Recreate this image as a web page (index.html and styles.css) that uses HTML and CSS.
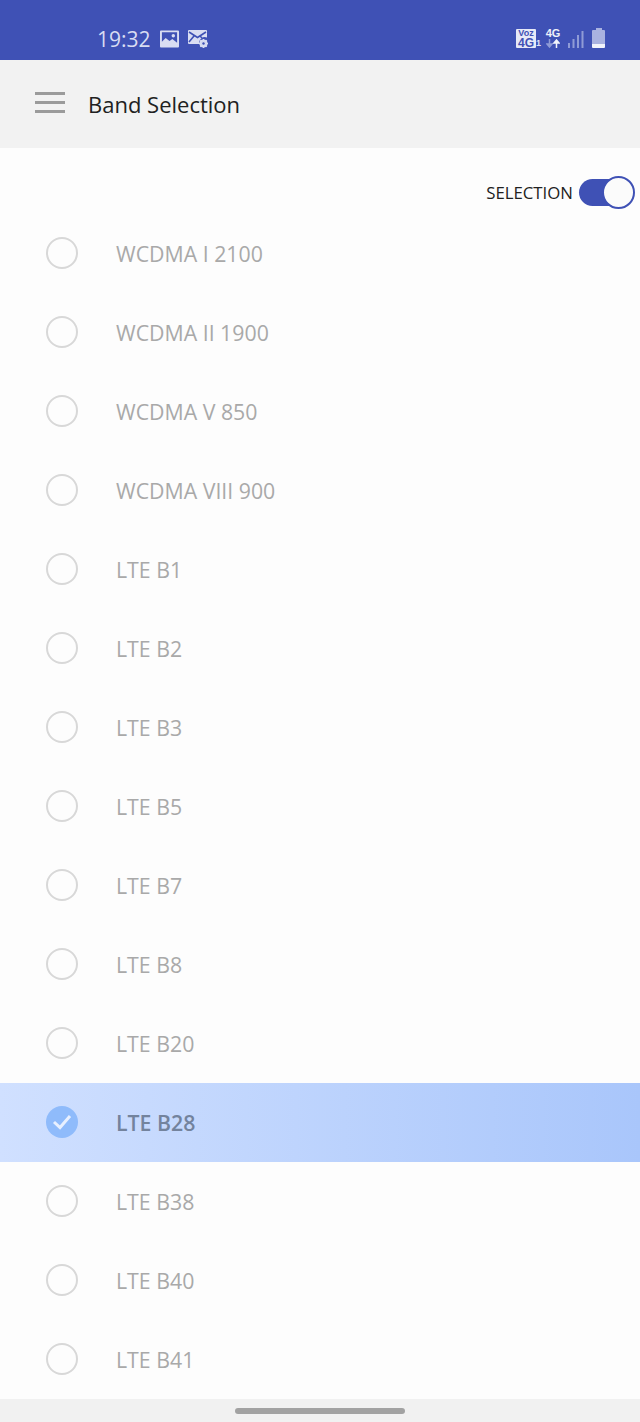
FILE: index.html
```html
<!DOCTYPE html>
<html lang="en">
<head>
  <meta charset="UTF-8" />
  <meta name="viewport" content="width=device-width, initial-scale=1.0"/>
  <title>Band Selection</title>
  <link rel="stylesheet" href="styles.css">
</head>
<body>

  <!-- Status Bar -->
  <div class="status-bar">
    <div class="status-left">
      <span class="clock">19:32</span>
      <svg class="status-icon" width="19" height="18" viewBox="0 0 20 18">
        <path fill="#d9ddf2" fill-rule="evenodd" d="M1 0h18a1 1 0 0 1 1 1v16a1 1 0 0 1-1 1H1a1 1 0 0 1-1-1V1a1 1 0 0 1 1-1zM2 2v10l4-4 4 3 3-2 5 4V2z"/>
        <circle cx="14" cy="5.500" r="1.800" fill="#d9ddf2"/>
      </svg>
      <svg class="status-icon" width="20" height="18" viewBox="0 0 20 18">
        <path fill="#d9ddf2" d="M1 0h17a1 1 0 0 1 1 1v6.500a5.500 5.500 0 0 0-7.500 6.500H1a1 1 0 0 1-1-1V1a1 1 0 0 1 1-1z"/>
        <path fill="none" stroke="#3f51b5" stroke-width="1.600" d="M1 2l8.500 5.500L18 2M1 12l5-6M12 6l2 2"/>
        <circle cx="15.500" cy="13.500" r="3" fill="none" stroke="#d9ddf2" stroke-width="2"/>
        <path stroke="#d9ddf2" stroke-width="1.400" d="M15.500 9v9M11 13.500h9M12.300 10.300l6.400 6.400M18.700 10.300l-6.400 6.400"/>
        <circle cx="15.500" cy="13.500" r="1.200" fill="#3f51b5"/>
      </svg>
    </div>
    <div class="status-right">
      <div class="sim-badge">
        <span class="sim-voz">Voz</span>
        <span class="sim-4g">4G</span>
      </div>
      <span class="sim-num">1</span>
      <div class="net-type">
        <span class="net-label">4G</span>
        <svg width="14" height="9" viewBox="0 0 14 9">
          <path stroke="#8f9bd6" stroke-width="1.500" fill="#8f9bd6" d="M3.500 0v6M1 5l2.500 3L6 5z"/>
          <path stroke="#f1f3fb" stroke-width="1.500" fill="#f1f3fb" d="M10.500 9V3M8 4l2.500-3L13 4z"/>
        </svg>
      </div>
      <svg class="signal" width="16" height="17" viewBox="0 0 16 17">
        <path fill="#8f9bd6" d="M0 12h2v5H0zM4.500 8h2v9h-2zM9 4h2v13H9zM13.500 0h2v17h-2z"/>
      </svg>
      <div class="battery">
        <div class="battery-cap"></div>
        <div class="battery-body"></div>
      </div>
    </div>
  </div>

  <!-- Toolbar -->
  <div class="toolbar">
    <div class="menu-icon">
      <span></span><span></span><span></span>
    </div>
    <div class="toolbar-title">Band Selection</div>
  </div>

  <!-- Selection Toggle -->
  <div class="selection-row">
    <span class="selection-label">SELECTION</span>
    <div class="toggle"><div class="toggle-knob"></div></div>
  </div>

  <!-- Band List -->
  <div class="band-list" id="bandList">
    <div class="band"><div class="radio"></div><div class="band-name">WCDMA I 2100</div></div>
    <div class="band"><div class="radio"></div><div class="band-name">WCDMA II 1900</div></div>
    <div class="band"><div class="radio"></div><div class="band-name">WCDMA V 850</div></div>
    <div class="band"><div class="radio"></div><div class="band-name">WCDMA VIII 900</div></div>
    <div class="band"><div class="radio"></div><div class="band-name">LTE B1</div></div>
    <div class="band"><div class="radio"></div><div class="band-name">LTE B2</div></div>
    <div class="band"><div class="radio"></div><div class="band-name">LTE B3</div></div>
    <div class="band"><div class="radio"></div><div class="band-name">LTE B5</div></div>
    <div class="band"><div class="radio"></div><div class="band-name">LTE B7</div></div>
    <div class="band"><div class="radio"></div><div class="band-name">LTE B8</div></div>
    <div class="band"><div class="radio"></div><div class="band-name">LTE B20</div></div>
    <div class="band selected">
      <div class="radio">
        <svg width="20" height="16" viewBox="0 0 20 16">
          <path fill="none" stroke="#e8f0ff" stroke-width="3" d="M2 8l6 5.500L18 2"/>
        </svg>
      </div>
      <div class="band-name">LTE B28</div>
    </div>
    <div class="band"><div class="radio"></div><div class="band-name">LTE B38</div></div>
    <div class="band"><div class="radio"></div><div class="band-name">LTE B40</div></div>
    <div class="band"><div class="radio"></div><div class="band-name">LTE B41</div></div>
  </div>

  <!-- Navigation Bar -->
  <div class="nav-bar">
    <div class="nav-handle"></div>
  </div>

</body>
</html>
```

FILE: styles.css
```css
body {
  margin: 0;
  font-family: "Open Sans", "Noto Sans", sans-serif;
  background: #fdfdfd;
  height: 1422px;
  overflow: hidden;
}

.status-bar {
  height: 60px;
  background: #3f51b5;
  display: flex;
  justify-content: space-between;
  align-items: flex-start;
  padding: 28px 35px 0 97px;
  box-sizing: border-box;
}

.status-left {
  display: flex;
  align-items: center;
  gap: 9px;
  height: 22px;
}

.clock {
  font-size: 21px;
  line-height: 22px;
  color: #d8dcf2;
}

.status-icon {
  display: block;
}

.status-right {
  display: flex;
  align-items: flex-end;
  height: 20px;
}

.sim-badge {
  width: 20px;
  height: 19px;
  background: #e6e9f7;
  border-radius: 1px;
  color: #3f51b5;
  font-weight: bold;
  text-align: center;
  display: flex;
  flex-direction: column;
  align-items: center;
  font-family: "Liberation Sans", sans-serif;
}

.sim-voz {
  font-size: 9px;
  line-height: 9px;
}

.sim-4g {
  font-size: 12px;
  line-height: 10px;
}

.sim-num {
  font-size: 9px;
  line-height: 9px;
  font-weight: bold;
  color: #dfe3f5;
  width: 5px;
  font-family: "Liberation Sans", sans-serif;
}

.net-type {
  margin-left: 4px;
  width: 16px;
  display: flex;
  flex-direction: column;
  align-items: center;
}

.net-type svg {
  display: block;
}

.net-label {
  font-family: "Liberation Sans", sans-serif;
  font-size: 11px;
  line-height: 11px;
  font-weight: bold;
  color: #eef0fa;
}

.signal {
  margin-left: 7px;
  display: block;
}

.battery {
  margin-left: 8px;
  width: 13px;
  display: flex;
  flex-direction: column;
  align-items: center;
}

.battery-cap {
  width: 6px;
  height: 2px;
  background: #a9b2e0;
}

.battery-body {
  width: 13px;
  height: 18px;
  background: linear-gradient(#a9b2e0 14px, #f1f3fb 14px);
  border-radius: 1px;
}

.toolbar {
  height: 88px;
  background: #f2f2f2;
  display: flex;
  align-items: center;
  padding-left: 35px;
}

.menu-icon {
  width: 30px;
  display: flex;
  flex-direction: column;
  gap: 6px;
  margin-bottom: 3px;
}

.menu-icon span {
  height: 3px;
  background: #9b9b9b;
}

.toolbar-title {
  margin-left: 23px;
  font-size: 22px;
  color: #212121;
  margin-bottom: 1px;
}

.selection-row {
  height: 66px;
  display: flex;
  justify-content: flex-end;
  align-items: center;
  padding: 23px 8px 0 0;
  box-sizing: border-box;
  gap: 6px;
}

.selection-label {
  font-size: 16.800px;
  color: #212121;
}

.toggle {
  width: 53px;
  height: 27px;
  background: #3f51b5;
  border-radius: 14px;
  display: flex;
  justify-content: flex-end;
  align-items: center;
}

.toggle-knob {
  width: 29px;
  height: 29px;
  flex: none;
  background: #fbfbfb;
  border: 2px solid #3f51b5;
  border-radius: 50%;
  margin-right: -3px;
}

.band {
  height: 79px;
  display: flex;
  align-items: center;
  padding-left: 46px;
  box-sizing: border-box;
}

.radio {
  width: 32px;
  height: 32px;
  box-sizing: border-box;
  border: 2px solid #d8d8d8;
  border-radius: 50%;
  display: flex;
  align-items: center;
  justify-content: center;
  margin-bottom: 2px;
}

.band-name {
  margin-left: 38px;
  font-size: 21.300px;
  color: #a9a9a9;
}

.band.selected {
  background: linear-gradient(to right, #d0e0ff, #a9c6fb);
}

.band.selected .radio {
  background: #8fbbfb;
  border: none;
}

.band.selected .band-name {
  color: #73839d;
  font-weight: 600;
}

.nav-bar {
  height: 23px;
  background: #f1f1f1;
  display: flex;
  justify-content: center;
  padding-top: 9px;
  box-sizing: border-box;
}

.nav-handle {
  width: 170px;
  height: 6px;
  border-radius: 3px;
  background: #a2a2a2;
}
```
